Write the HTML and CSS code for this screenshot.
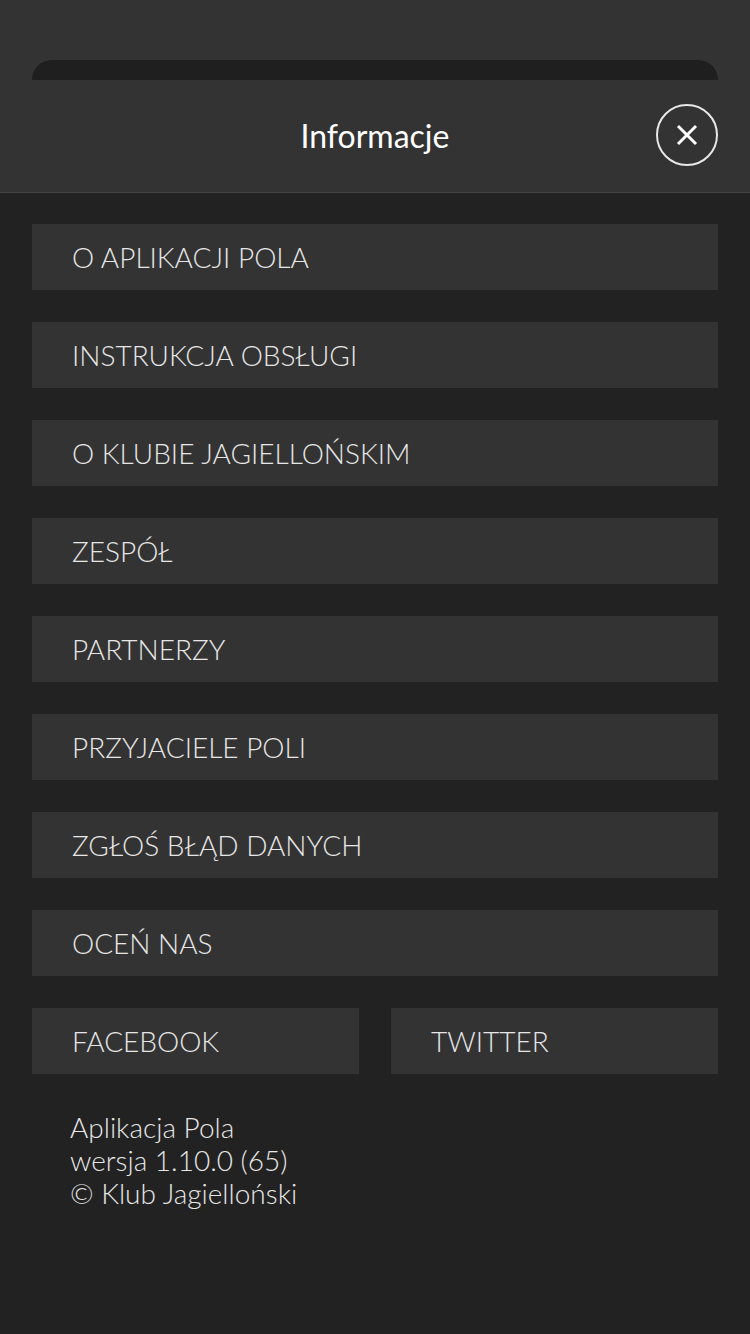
FILE: index.html
```html
<!DOCTYPE html>
<html lang="pl">
<head>
<meta charset="utf-8">
<link rel="stylesheet" href="styles.css">
</head>
<body>
<div class="screen">
  <div class="backdrop">
    <div class="sheet-edge"></div>
  </div>
  <header class="header">
    <h1 class="title">Informacje</h1>
    <button class="close" aria-label="Zamknij">
      <svg width="22" height="22" viewBox="0 0 22 22"><path d="M2 2 L20 20 M20 2 L2 20" stroke="#fff" stroke-width="3" stroke-linecap="butt" fill="none"/></svg>
    </button>
  </header>
  <main class="content">
    <div class="item">O APLIKACJI POLA</div>
    <div class="item">INSTRUKCJA OBSŁUGI</div>
    <div class="item">O KLUBIE JAGIELLOŃSKIM</div>
    <div class="item">ZESPÓŁ</div>
    <div class="item">PARTNERZY</div>
    <div class="item">PRZYJACIELE POLI</div>
    <div class="item">ZGŁOŚ BŁĄD DANYCH</div>
    <div class="item">OCEŃ NAS</div>
    <div class="row">
      <div class="item">FACEBOOK</div>
      <div class="item">TWITTER</div>
    </div>
    <div class="footer">
      <div>Aplikacja Pola</div>
      <div>wersja 1.10.0 (65)</div>
      <div>© Klub Jagielloński</div>
    </div>
  </main>
</div>
</body>
</html>
```
FILE: styles.css
```css
* { box-sizing: border-box; }
html, body { margin: 0; padding: 0; }
body {
  width: 750px;
  height: 1334px;
  background: #222222;
  font-family: "Lato", "Noto Sans", sans-serif;
  overflow: hidden;
}
.screen { width: 750px; height: 1334px; display: flex; flex-direction: column; }
.backdrop {
  height: 80px;
  background: #333333;
  padding: 60px 32px 0;
}
.sheet-edge {
  height: 20px;
  background: #1f1f1f;
  border-radius: 20px 20px 0 0;
}
.header {
  height: 113px;
  background: #333333;
  border-bottom: 1px solid #454545;
  display: flex;
  align-items: center;
  justify-content: center;
  position: relative;
}
.title {
  margin: 0;
  font-size: 32px;
  font-weight: 400;
  color: #ffffff;
  margin-top: -2px;
}
.close {
  position: absolute;
  right: 32px;
  top: 24px;
  width: 62px;
  height: 62px;
  border-radius: 50%;
  border: 2px solid #e8e8e8;
  background: transparent;
  display: flex;
  align-items: center;
  justify-content: center;
  padding: 0;
}
.content {
  flex: 1;
  padding: 31px 32px 0;
  display: flex;
  flex-direction: column;
  gap: 32px;
}
.item {
  height: 66px;
  background: #333333;
  color: #e6e6e6;
  font-size: 28px;
  font-weight: 300;
  display: flex;
  align-items: center;
  padding-left: 40px;
}
.row {
  display: grid;
  grid-template-columns: 1fr 1fr;
  gap: 32px;
}
.footer {
  margin-top: 5px;
  padding-left: 38px;
  color: #e6e6e6;
  font-size: 28px;
  font-weight: 300;
  line-height: 33px;
}
```
